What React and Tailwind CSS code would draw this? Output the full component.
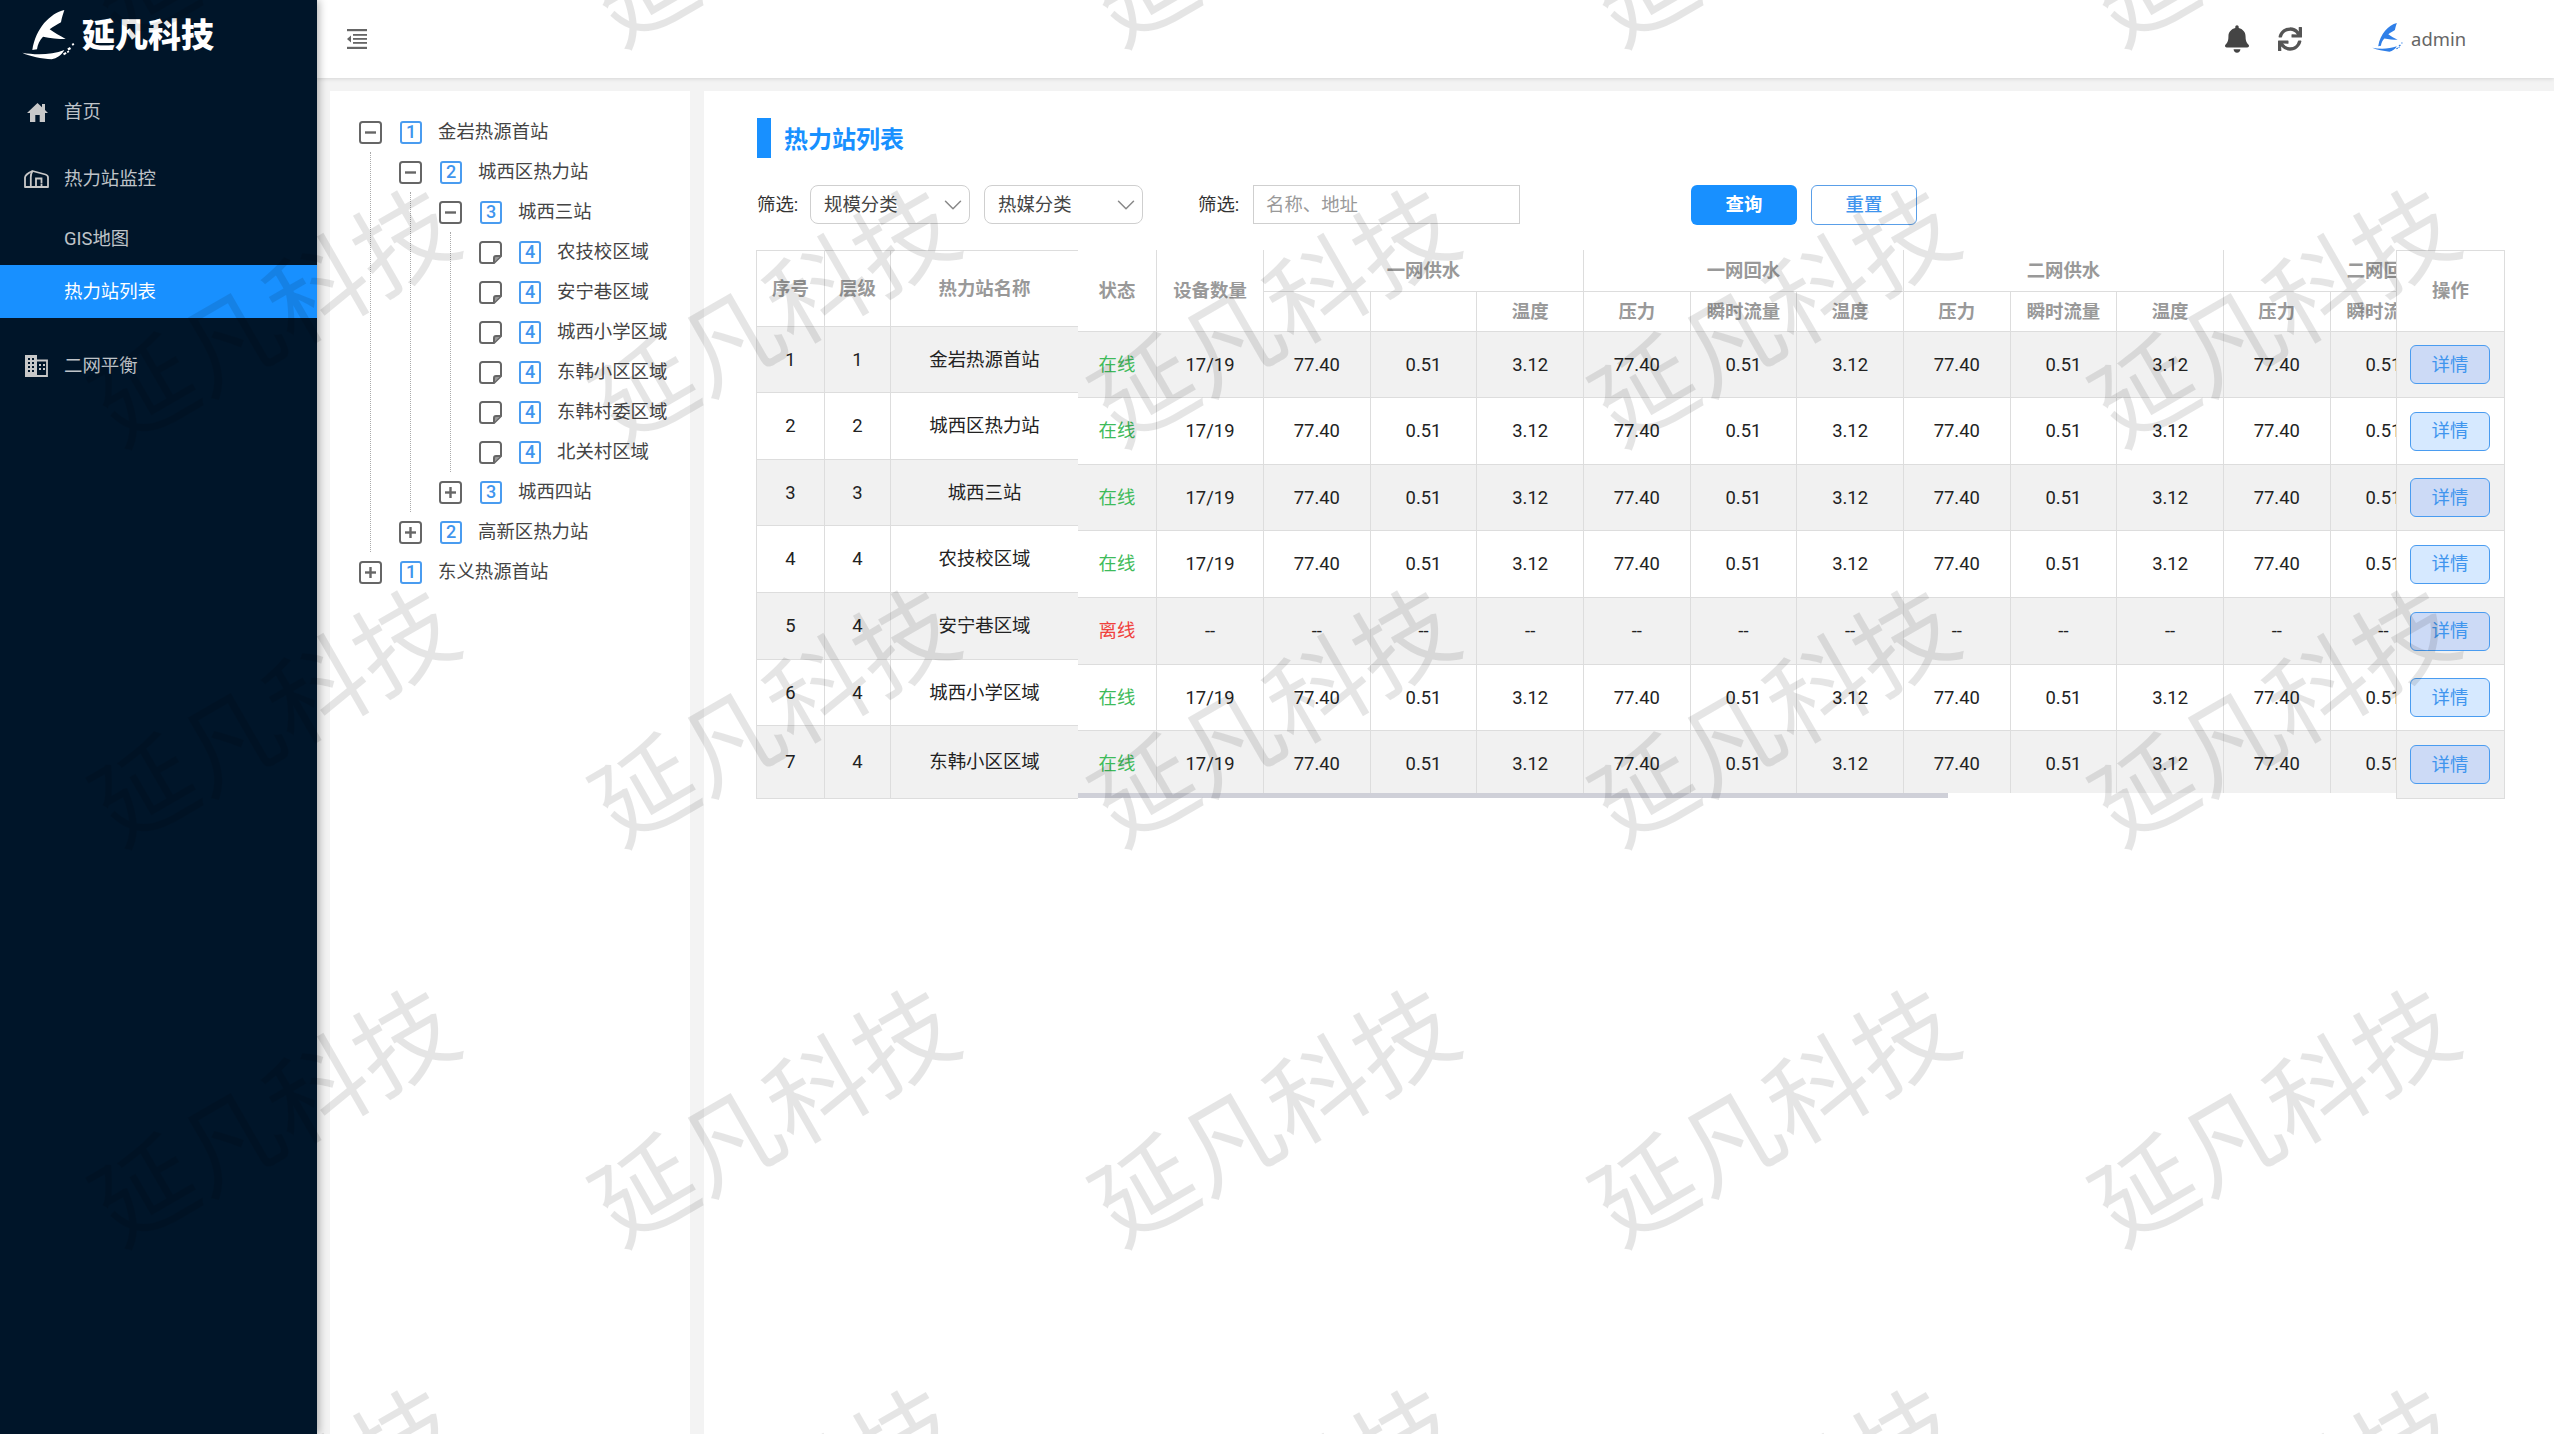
import React from "react";
import { FaBell, FaSync } from "react-icons/fa";
import { ChevronDown } from "lucide-react";

function Logo({ className, color }) {
  return (
    <svg viewBox="0 0 210 180" className={className} fill={color}>
      <path d="M148 15C105 25 62 70 52 135L66 133C68 118 74 105 84 95C105 100 130 102 152 102C135 92 118 84 104 73C115 65 128 58 138 52C140 38 145 25 148 15Z" />
      <path d="M22 143C60 150 110 150 148 135C140 150 125 160 110 163C80 160 45 155 22 143Z" />
      <rect x="145" y="143" width="9" height="6" transform="rotate(-30 149 146)" />
      <rect x="158" y="128" width="9" height="7" transform="rotate(-30 162 131)" />
      <rect x="171" y="115" width="6" height="6" transform="rotate(-30 174 118)" />
      <rect x="156" y="138" width="6" height="5" transform="rotate(-30 159 140)" />
    </svg>
  );
}

function HomeIcon() {
  return (
    <svg viewBox="0 0 21 19" className="ml-[2px] h-[19px] w-[21px]" fill="#c8c8c8">
      <path d="M10.5 0L15 4.2V1H18V7L21 10H18V19H12.7V12H8.3V19H3V10H0Z" />
    </svg>
  );
}

function HouseIcon() {
  return (
    <svg viewBox="0 0 25 18" className="w-[25px] h-[18px]" fill="none" stroke="#c8c8c8" strokeWidth="1.8">
      <path d="M1 17V7.5C1 5.5 5 2.5 8.5 1L21.5 4.5C23 5 24 6.2 24 7.5V17Z" strokeLinejoin="round" />
      <path d="M8.5 1C6.5 4 6.8 6 6.8 8V17" />
      <path d="M12 17V8.5H17.5V13.5" />
      <path d="M17.5 17V14" />
    </svg>
  );
}

function BuildingIcon() {
  const windows = [
    [3, 3], [7, 3], [3, 7], [7, 7], [3, 11], [7, 11], [3, 15], [7, 15],
    [14, 9], [18, 9], [14, 13], [18, 13],
  ];
  return (
    <svg viewBox="0 0 23 22" className="w-[23px] h-[22px]">
      <rect x="0" y="0" width="12" height="22" fill="#c8c8c8" />
      <path d="M12 5.5H22V21H12" fill="none" stroke="#c8c8c8" strokeWidth="1.8" />
      {windows.map(([x, y], i) => (
        <rect key={i} x={x} y={y} width="2" height="2" fill={x > 12 ? "#c8c8c8" : "#001529"} />
      ))}
    </svg>
  );
}

function CollapseIcon() {
  return (
    <svg viewBox="0 0 20 20" className="w-[20px] h-[20px]" fill="#666">
      <rect x="0" y="0" width="20" height="2.2" />
      <rect x="6" y="5" width="14" height="1.8" />
      <rect x="6" y="9" width="14" height="1.8" />
      <rect x="6" y="13" width="14" height="1.8" />
      <rect x="0" y="17.8" width="20" height="2.2" />
      <path d="M4 6.5V13.5L0 10Z" />
    </svg>
  );
}

function Expander({ open }) {
  return (
    <svg viewBox="0 0 23 23" className="w-[23px] h-[23px] shrink-0 mr-[18px]" fill="none" stroke="#666">
      <rect x="1" y="1" width="21" height="21" rx="2.5" strokeWidth="2" />
      <path d="M6 11.5H17" strokeWidth="2.4" />
      {!open && <path d="M11.5 6V17" strokeWidth="2.4" />}
    </svg>
  );
}

function Leaf() {
  return (
    <svg viewBox="0 0 23 23" className="w-[23px] h-[23px] shrink-0 mr-[17px]" fill="none" stroke="#666" strokeWidth="2">
      <path d="M3.5 1H19.5A2.5 2.5 0 0 1 22 3.5V15L15 22H3.5A2.5 2.5 0 0 1 1 19.5V3.5A2.5 2.5 0 0 1 3.5 1Z" />
      <path d="M21.5 15H17A2 2 0 0 0 15 17V21.5" fill="#999" />
    </svg>
  );
}

function TreeRow({ kind, level, label }) {
  return (
    <div className="flex h-[40px] items-center">
      {kind === "leaf" ? <Leaf /> : <Expander open={kind === "open"} />}
      <span className="mr-[16px] flex h-[23px] w-[22px] shrink-0 items-center justify-center rounded-[3px] border-2 border-[#4a9cf0] text-[18px] font-medium leading-none text-[#3f95ee]">
        {level}
      </span>
      <span className="whitespace-nowrap text-[18.4px] leading-none text-[#444]">{label}</span>
    </div>
  );
}

function TreeChildren({ children }) {
  return <div className="ml-[11px] border-l border-dotted border-[#aaa] pl-[28px]">{children}</div>;
}

function Tree() {
  const leaves = ["农技校区域", "安宁巷区域", "城西小学区域", "东韩小区区域", "东韩村委区域", "北关村区域"];
  return (
    <div className="w-[360px] shrink-0 bg-white pl-[29px] pt-[21px]">
      <TreeRow kind="open" level="1" label="金岩热源首站" />
      <TreeChildren>
        <TreeRow kind="open" level="2" label="城西区热力站" />
        <TreeChildren>
          <TreeRow kind="open" level="3" label="城西三站" />
          <TreeChildren>
            {leaves.map((l) => (
              <TreeRow key={l} kind="leaf" level="4" label={l} />
            ))}
          </TreeChildren>
          <TreeRow kind="closed" level="3" label="城西四站" />
        </TreeChildren>
        <TreeRow kind="closed" level="2" label="高新区热力站" />
      </TreeChildren>
      <TreeRow kind="closed" level="1" label="东义热源首站" />
    </div>
  );
}

function Select({ label, className }) {
  return (
    <div className={`flex h-[39px] items-center justify-between rounded-[8px] border border-[#cfcfcf] pl-[13px] pr-[1px] text-[18.4px] text-[#444] ${className}`}>
      <span>{label}</span>
      <ChevronDown className="h-[30px] w-[30px] text-[#888]" strokeWidth={1.2} />
    </div>
  );
}

const leftRows = [
  { h: "h-[66px]", n: 1, l: 1, name: "金岩热源首站", gray: true },
  { h: "h-[67px]", n: 2, l: 2, name: "城西区热力站" },
  { h: "h-[66px]", n: 3, l: 3, name: "城西三站", gray: true },
  { h: "h-[67px]", n: 4, l: 4, name: "农技校区域" },
  { h: "h-[67px]", n: 5, l: 4, name: "安宁巷区域", gray: true },
  { h: "h-[66px]", n: 6, l: 4, name: "城西小学区域" },
  { h: "h-[73px]", n: 7, l: 4, name: "东韩小区区域", gray: true },
];

const midRows = [
  { h: "h-[66px]", on: true, gray: true },
  { h: "h-[67px]", on: true },
  { h: "h-[66px]", on: true, gray: true },
  { h: "h-[67px]", on: true },
  { h: "h-[67px]", on: false, gray: true },
  { h: "h-[66px]", on: true },
  { h: "h-[67px]", on: true, gray: true },
];

const rightRows = [
  { h: "h-[66px]", gray: true },
  { h: "h-[67px]" },
  { h: "h-[66px]", gray: true },
  { h: "h-[67px]" },
  { h: "h-[67px]", gray: true },
  { h: "h-[66px]" },
  { h: "h-[68px]", gray: true },
];

const values = ["77.40", "0.51", "3.12"];
const groups = ["一网供水", "一网回水", "二网供水", "二网回水"];
const cellB = "border-r border-b border-[#dddddd]";
const headText = "text-[18.4px] font-bold text-[#999999] text-center";
const bodyText = "text-center text-[18.4px] text-[#222]";

function LeftTable() {
  return (
    <table className="w-[322px] shrink-0 table-fixed border-separate border-spacing-0 self-start border-l border-t border-[#dddddd]">
      <colgroup>
        <col className="w-[68px]" />
        <col className="w-[66px]" />
        <col className="w-[187px]" />
      </colgroup>
      <thead>
        <tr className="h-[76px]">
          <th className={`${cellB} ${headText}`}>序号</th>
          <th className={`${cellB} ${headText}`}>层级</th>
          <th className={`border-b border-[#dddddd] ${headText}`}>热力站名称</th>
        </tr>
      </thead>
      <tbody>
        {leftRows.map((r) => (
          <tr key={r.n} className={`${r.h} ${r.gray ? "bg-[#f1f1f1]" : "bg-white"}`}>
            <td className={`${cellB} ${bodyText}`}>{r.n}</td>
            <td className={`${cellB} ${bodyText}`}>{r.l}</td>
            <td className={`border-b border-[#dddddd] ${bodyText}`}>{r.name}</td>
          </tr>
        ))}
      </tbody>
    </table>
  );
}

function MidTable() {
  const subs = [];
  groups.forEach((g, gi) => {
    ["压力", "瞬时流量", "温度"].forEach((s, si) => subs.push({ key: `${gi}-${si}`, label: gi === 0 && si < 2 ? "" : s }));
  });
  const columns = Array.from({ length: 12 }, (_, i) => i);
  return (
    <div className="flex h-[548px] w-[1318px] shrink-0 flex-col self-start">
      <div className="h-[543px] overflow-hidden">
        <table className="w-[1466px] table-fixed border-separate border-spacing-0">
          <colgroup>
            <col className="w-[79px]" />
            <col className="w-[107px]" />
            {columns.map((c) => (
              <col key={c} className="w-[106.67px]" />
            ))}
          </colgroup>
          <thead>
            <tr className="h-[42px]">
              <th rowSpan={2} className={`${cellB} ${headText}`}>状态</th>
              <th rowSpan={2} className={`${cellB} ${headText}`}>设备数量</th>
              {groups.map((g) => (
                <th key={g} colSpan={3} className={`${cellB} ${headText}`}>{g}</th>
              ))}
            </tr>
            <tr className="h-[40px]">
              {subs.map((s) => (
                <th key={s.key} className={`${cellB} ${headText}`}>{s.label}</th>
              ))}
            </tr>
          </thead>
          <tbody>
            {midRows.map((r, i) => (
              <tr key={i} className={`${r.h} ${r.gray ? "bg-[#f1f1f1]" : "bg-white"}`}>
                <td className={`${cellB} text-center text-[18.4px] ${r.on ? "text-[#3fbb5b]" : "text-[#f0413c]"}`}>{r.on ? "在线" : "离线"}</td>
                <td className={`${cellB} ${bodyText}`}>{r.on ? "17/19" : "--"}</td>
                {columns.map((c) => (
                  <td key={c} className={`${cellB} ${bodyText}`}>
                    {r.on ? values[c % 3] : "--"}
                  </td>
                ))}
              </tr>
            ))}
          </tbody>
        </table>
      </div>
      <div className="h-[5px] w-[870px] bg-[#cfd0d8]" />
    </div>
  );
}

function RightTable() {
  return (
    <table className="w-[109px] shrink-0 table-fixed border-separate border-spacing-0 self-start border-l border-r border-t border-[#dddddd]">
      <thead>
        <tr className="h-[81px]">
          <th className={`border-b border-[#dddddd] ${headText}`}>操作</th>
        </tr>
      </thead>
      <tbody>
        {rightRows.map((r, i) => (
          <tr key={i} className={`${r.h} ${r.gray ? "bg-[#f1f1f1]" : "bg-white"}`}>
            <td className="border-b border-[#dddddd] pl-[13px] align-middle">
              <button className={`h-[39px] w-[80px] rounded-[6px] border border-[#4a9cf0] text-[18.4px] text-[#3f95ee] ${r.gray ? "bg-[#ccdaf6]" : "bg-[#d6e9ff]"}`}>
                详情
              </button>
            </td>
          </tr>
        ))}
      </tbody>
    </table>
  );
}

function Sidebar() {
  return (
    <aside className="relative z-10 w-[317px] shrink-0 bg-[#001529] shadow-[2px_0_8px_rgba(0,0,0,0.3)]">
      <div className="flex h-[78px] items-center pb-[8px] pl-[15px]">
        <Logo className="h-[60px] w-[70px]" color="#ffffff" />
        <span className="-ml-[3px] whitespace-nowrap text-[33px] font-black leading-none text-white">延凡科技</span>
      </div>
      <nav className="text-[18.4px] text-white/75">
        <div className="flex h-[68px] items-center pl-[24px]">
          <span className="mr-[15px] flex w-[25px] justify-center"><HomeIcon /></span>
          首页
        </div>
        <div className="flex h-[66px] items-center pl-[24px]">
          <span className="mr-[15px] flex w-[25px] justify-center"><HouseIcon /></span>
          热力站监控
        </div>
        <div className="flex h-[53px] items-center pl-[64px]">GIS地图</div>
        <div className="flex h-[53px] items-center bg-[#1890ff] pl-[64px] text-white">热力站列表</div>
        <div className="mt-[15px] flex h-[66px] items-center pl-[24px]">
          <span className="mr-[15px] flex w-[25px] justify-center"><BuildingIcon /></span>
          二网平衡
        </div>
      </nav>
    </aside>
  );
}

function Topbar() {
  return (
    <header className="relative z-[1] flex h-[78px] shrink-0 items-center bg-white pl-[30px] pr-[88px] shadow-[0_1px_4px_rgba(0,0,0,0.12)]">
      <CollapseIcon />
      <div className="ml-auto flex items-center">
        <FaBell className="h-[28px] w-[24px] text-[#444]" />
        <FaSync className="ml-[29px] h-[24px] w-[24px] text-[#555]" />
        <Logo className="ml-[66px] -mt-[3px] h-[35px] w-[41px]" color="#2f7fe8" />
        <span className="ml-[2px] text-[18.4px] text-[#666] [font-family:'Noto_Sans',sans-serif]">admin</span>
      </div>
    </header>
  );
}

function Content() {
  return (
    <section className="ml-[14px] min-w-0 flex-1 bg-white pl-[52px] pt-[27px]">
      <div className="ml-px flex h-[40px] items-center border-l-[14px] border-[#1890ff] pl-[13px] pt-[3px] text-[24px] font-bold leading-none text-[#1890ff]">
        热力站列表
      </div>
      <div className="ml-px mt-[27px] flex h-[39px] items-center text-[18.4px] text-[#333]">
        <span className="w-[53px]">筛选:</span>
        <Select label="规模分类" className="w-[160px]" />
        <Select label="热媒分类" className="ml-[14px] w-[159px]" />
        <span className="ml-[55px] w-[55px]">筛选:</span>
        <div className="flex h-[39px] w-[267px] items-center border border-[#cfcfcf] pl-[12px] text-[#999]">名称、地址</div>
        <button className="ml-[171px] h-[40px] w-[106px] rounded-[6px] bg-[#1890ff] font-bold text-white">查询</button>
        <button className="ml-[14px] h-[40px] w-[106px] rounded-[6px] border border-[#5a9fe8] bg-white font-medium text-[#3f95ee]">重置</button>
      </div>
      <div className="mt-[26px] flex">
        <LeftTable />
        <MidTable />
        <RightTable />
      </div>
    </section>
  );
}

function Watermark() {
  const cells = Array.from({ length: 25 }, (_, i) => i);
  return (
    <div className="pointer-events-none absolute inset-0 z-50 overflow-hidden">
      <div className="absolute left-[26px] -top-[282px] grid grid-cols-[repeat(5,500px)] auto-rows-[400px]">
        {cells.map((i) => (
          <div key={i} className="flex items-center justify-center">
            <span className="-rotate-30 whitespace-nowrap text-[100px] leading-none text-black/10">延凡科技</span>
          </div>
        ))}
      </div>
    </div>
  );
}

export default function App() {
  return (
    <div className="relative flex h-screen w-screen overflow-hidden bg-[#f3f3f3] [font-family:Roboto,'Noto_Sans_CJK_SC',sans-serif]">
      <Sidebar />
      <main className="flex min-w-0 flex-1 flex-col">
        <Topbar />
        <div className="flex min-h-0 flex-1 pl-[13px] pt-[13px]">
          <Tree />
          <Content />
        </div>
      </main>
      <Watermark />
    </div>
  );
}
